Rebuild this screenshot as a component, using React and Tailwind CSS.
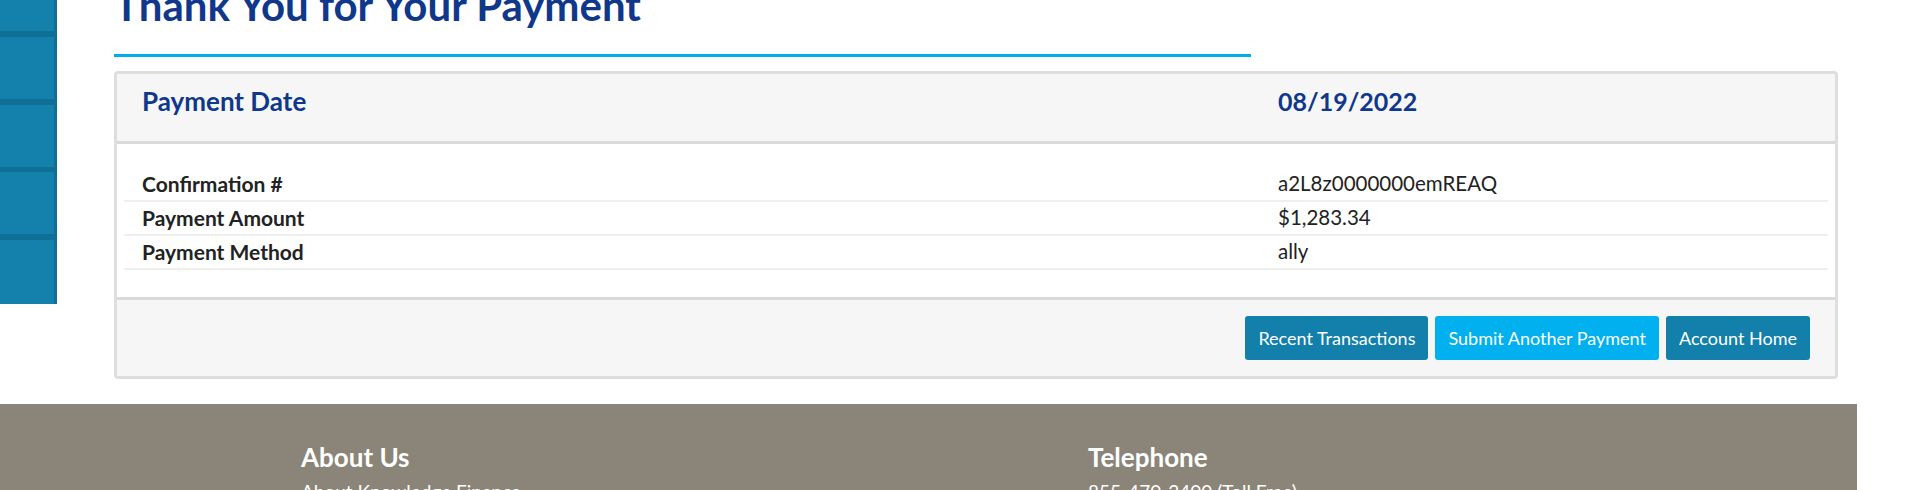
import React from 'react';

const rows = [
  { label: 'Confirmation #', value: 'a2L8z0000000emREAQ' },
  { label: 'Payment Amount', value: '$1,283.34' },
  { label: 'Payment Method', value: 'ally' }
];

export default function App() {
  return (
    <div className="-mt-[31px] w-[1857px] bg-white font-['Lato',sans-serif] text-[#222]">
      <div className="flex items-start">
        {/* side menu */}
        <div className="w-[57px] shrink-0 border-r-[3px] border-[#0f6f95] bg-[#0f6f95]">
          <div className="h-[62px] bg-[#1381ac]"></div>
          <div className="mt-[6px] h-[62px] bg-[#1381ac]"></div>
          <div className="mt-[6px] h-[62px] bg-[#1381ac]"></div>
          <div className="mt-[5px] h-[62px] bg-[#1381ac]"></div>
          <div className="mt-[6px] h-[64px] bg-[#1381ac]"></div>
        </div>

        <div className="pl-[57px] pt-[11px]">
          <h1 className="w-[1137px] border-b-[3px] border-[#00aeef] pb-[24px] text-[42px] font-bold leading-[50px] text-[#0f378b]">
            Thank You for Your Payment
          </h1>

          <div className="mt-[14px] w-[1724px] overflow-hidden rounded-[4px] border-[3px] border-[#dedede]">
            <div className="h-[70px] border-b-[3px] border-[#d9d9d9] bg-[#f6f6f6] px-[7px] pt-[9px]">
              <div className="grid grid-cols-[2fr_1fr] font-bold leading-[36px] text-[#0f378b]">
                <div className="px-[18px] text-[26px]">Payment Date</div>
                <div className="px-[18px] text-[25px]">08/19/2022</div>
              </div>
            </div>

            <div className="h-[156px] border-b-[3px] border-[#d9d9d9] px-[7px] pt-[24px]">
              {rows.map((r) => (
                <div key={r.label} className="grid h-[34px] grid-cols-[2fr_1fr] items-center border-b-2 border-[#efefef] pb-[1px]">
                  <div className="px-[18px] text-[21px] font-bold">{r.label}</div>
                  <div className="px-[18px] text-[20.5px]">{r.value}</div>
                </div>
              ))}
            </div>

            <div className="flex h-[76px] items-center justify-end gap-[7px] bg-[#f6f6f6] pr-[25px]">
              <button className="h-[44px] rounded-[3px] bg-[#1280ab] px-[13px] text-[18px] text-white">Recent Transactions</button>
              <button className="h-[44px] rounded-[3px] bg-[#00b0ef] px-[13px] text-[18px] text-white">Submit Another Payment</button>
              <button className="h-[44px] rounded-[3px] bg-[#1280ab] px-[13px] text-[18px] text-white">Account Home</button>
            </div>
          </div>
        </div>
      </div>

      <footer className="mt-[25px] h-[200px] bg-[#8b8579] pl-[301px] pt-[38px] text-white">
        <div className="flex">
          <div className="w-[787px]">
            <h3 className="text-[26px] font-bold leading-[30px]">About Us</h3>
            <p className="mt-[6px] text-[19px]">About Knowledge Finance</p>
          </div>
          <div>
            <h3 className="text-[26px] font-bold leading-[30px]">Telephone</h3>
            <p className="mt-[6px] text-[19px]">855-470-2400 (Toll Free)</p>
          </div>
        </div>
      </footer>
    </div>
  );
}
